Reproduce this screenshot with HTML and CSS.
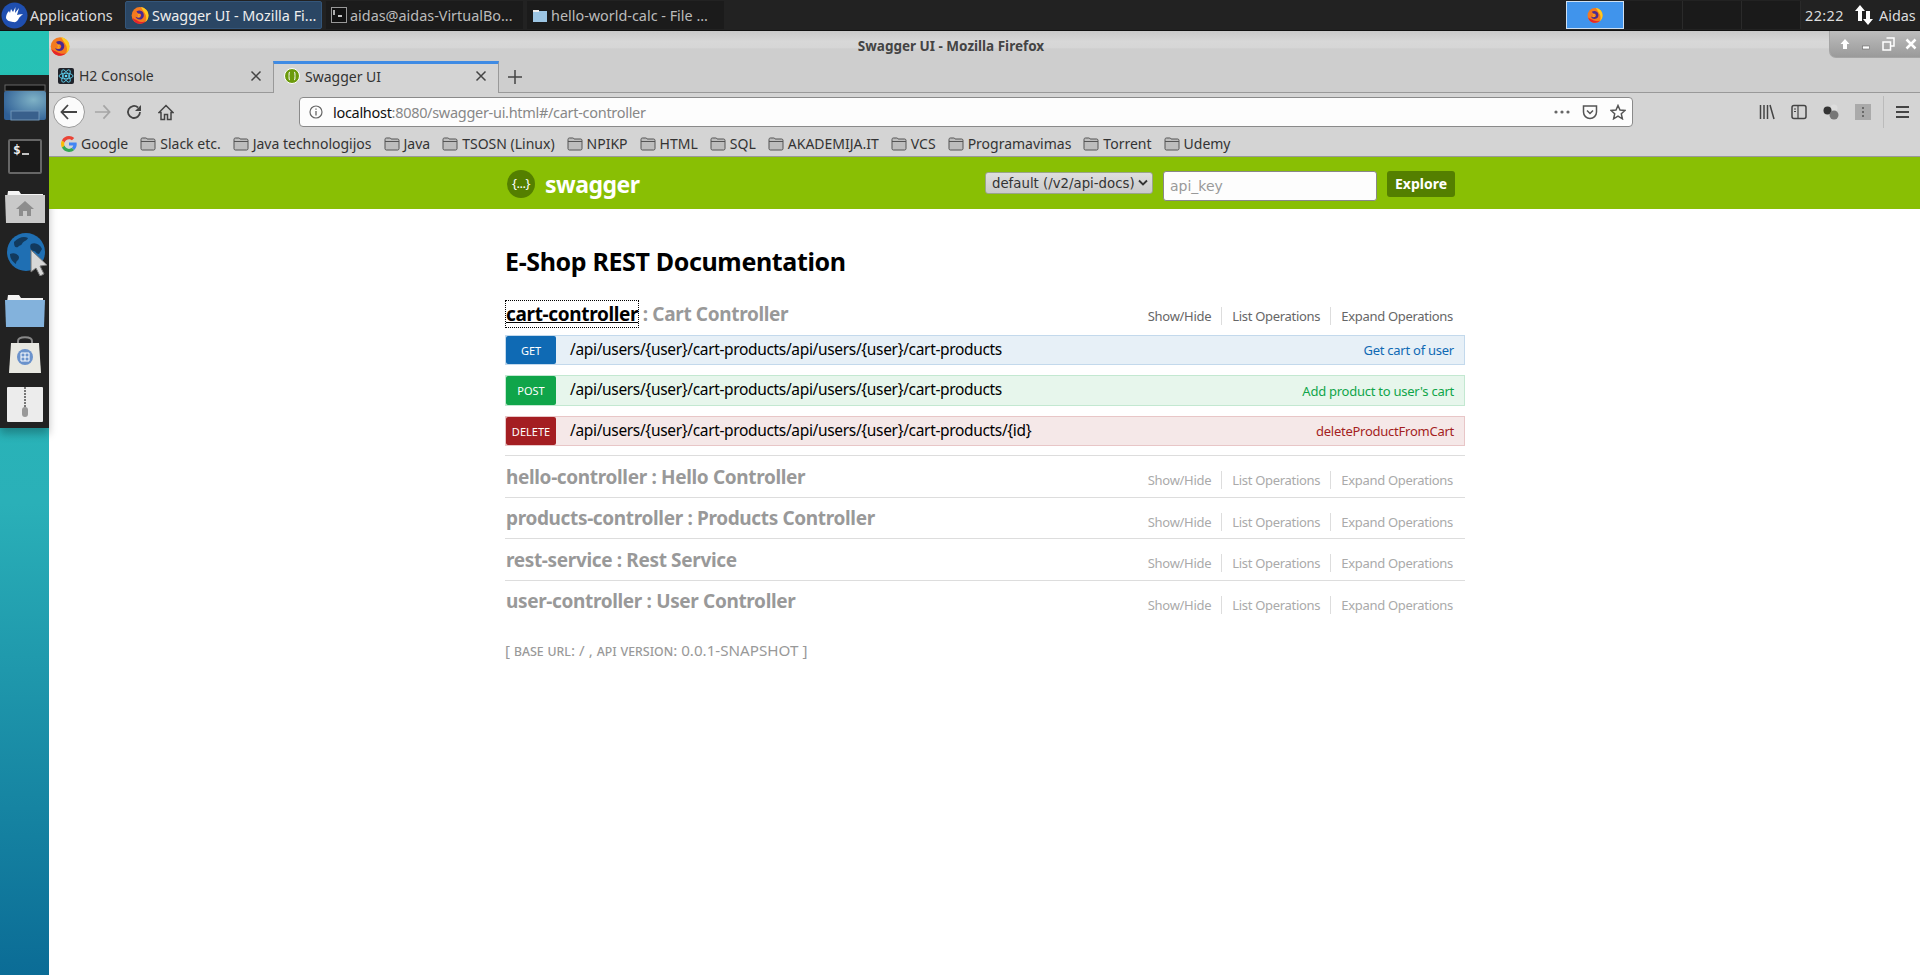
FILE: index.html
```html
<!DOCTYPE html>
<html lang="en">
<head>
    <meta charset="UTF-8">
    <meta name="viewport" content="width=device-width, initial-scale=1.0">
    <title>Swagger UI</title>
    <link rel="stylesheet" href="styles.css">
</head>
<body>
    <svg class="defs" width="0" height="0">
        <symbol id="firefox" viewBox="0 0 20 20">
            <circle cx="10" cy="10.500" r="9.300" fill="#f47a1f"/>
            <path d="M11 1c5 1 8.500 4.500 8.500 9.500 0 3-1.300 5.500-3.500 7.200 1.500-3 1.500-7-1-10.200C13.500 5 12 3 11 1z" fill="#ffc91f"/>
            <path d="M1.500 13c1 4 4.500 6.800 8.500 6.800 2.500 0 4.500-1 6-2.500-3 1-6.500.5-9-1.300C5 15 3 14.500 1.500 13z" fill="#e5252b"/>
            <path d="M6 6c3-2 7-1 8 2.500 1 3.500-1 6.500-4.500 6.500-2.500 0-4-1.500-4.500-3 1.500 1 4 1.500 5.500 0 1-1 1-2.500 0-3L8 8.500z" fill="#4b2a8f"/>
            <path d="M7 8.500h3.500l-1.500 2 1.500 2H7l1-2z" fill="#f9a11f"/>
        </symbol>
        <symbol id="folder" viewBox="0 0 16 14">
            <path d="M1 2.500C1 1.700 1.500 1 2.300 1h3.500c.7 0 1 .4 1.300 1h6.600c.8 0 1.300.6 1.300 1.300v8.400c0 .7-.5 1.300-1.300 1.300H2.300C1.500 13 1 12.400 1 11.700z" fill="#bdbdbd" stroke="#555"/>
            <path d="M1 4.500h14" stroke="#555"/>
        </symbol>
        <symbol id="close" viewBox="0 0 12 12">
            <path d="M1.500 1.500l9 9M10.500 1.500l-9 9" stroke="#444" stroke-width="1.500" fill="none"/>
        </symbol>
    </svg>

    <header class="panel">
        <div class="apps">
            <svg width="27" height="27" viewBox="0 0 27 27">
                <circle cx="13.500" cy="13.500" r="13" fill="#1f4fb0"/>
                <path d="M5 16c0-3 1-5 3-7l1 2 1-4 2 3 2.500-5-.5 6 4-5-2 7c2-.5 4-1 6-.5-2 1-3.500 2.500-4.500 4.500-1 2.500-3 3.500-5.500 3-3-.5-6-1-7-4z" fill="#fff"/>
            </svg>
            <span>Applications</span>
        </div>
        <div class="task task-active">
            <svg width="18" height="20"><use href="#firefox"/></svg>
            <span>Swagger UI - Mozilla Fi...</span>
        </div>
        <div class="task">
            <svg width="16" height="16" viewBox="0 0 16 16">
                <rect x=".5" y=".5" width="15" height="15" fill="#111" stroke="#999"/>
                <path d="M3 3v5M7 9h4" stroke="#fff" stroke-width="1.300"/>
            </svg>
            <span>aidas@aidas-VirtualBo...</span>
        </div>
        <div class="task">
            <svg width="16" height="16" viewBox="0 0 16 16">
                <path d="M1 3h5l1 1h8v11H1z" fill="#9cc5e3"/>
                <path d="M1 3h6v2H1z" fill="#eee"/>
            </svg>
            <span>hello-world-calc - File ...</span>
        </div>
        <div class="pager">
            <div class="pager-cell pager-active">
                <svg width="16" height="20"><use href="#firefox"/></svg>
            </div>
            <div class="pager-cell"></div>
            <div class="pager-cell"></div>
            <div class="pager-cell"></div>
        </div>
        <span class="clock">22:22</span>
        <svg class="net" width="20" height="24" viewBox="0 0 20 24">
            <path d="M6 2l5 6H8v10H4V8H1z" fill="#fff"/>
            <path d="M14 22l5-6h-3V8h-4v8H9z" fill="#fff"/>
        </svg>
        <span class="user">Aidas</span>
    </header>

    <div class="desktop">
        <aside class="side">
            <nav class="dock">
                <svg width="42" height="37" viewBox="0 0 42 37">
                    <defs>
                        <radialGradient id="screen" cx=".7" cy=".3" r=".8">
                            <stop offset="0" stop-color="#7fb2c6"/>
                            <stop offset="1" stop-color="#2f5f96"/>
                        </radialGradient>
                    </defs>
                    <rect x="1" y="1" width="40" height="6" fill="#111" stroke="#666"/>
                    <rect y="7" width="42" height="29" rx="2" fill="url(#screen)"/>
                    <rect x="7" y="27" width="28" height="9" fill="#39608c" stroke="#6f93b5"/>
                </svg>
                <svg class="dock-term" width="34" height="35" viewBox="0 0 34 35">
                    <rect x="1" y="1" width="32" height="33" rx="1" fill="#1a1a1a" stroke="#666" stroke-width="2"/>
                    <text x="5" y="15" class="term-text">$</text>
                    <path d="M14 15h7" stroke="#eee" stroke-width="1.600"/>
                </svg>
                <svg class="dock-home" width="40" height="33" viewBox="0 0 40 33">
                    <path d="M3 1h11l2 3h22v4H2z" fill="#f4f4f4"/>
                    <path d="M0 5h40v28H1z" fill="#c9c9c9"/>
                    <path d="M20 11l9 8h-3v7h-4v-5h-4v5h-4v-7h-3z" fill="#8d8d8d"/>
                </svg>
                <svg class="dock-globe" width="42" height="44" viewBox="0 0 42 44">
                    <circle cx="20" cy="20" r="19" fill="#1f6fb3"/>
                    <path d="M8 10c5-5 10-6 14-4-1 3-5 3-6 6-1 2-3 1-4 3-2 1-4 0-4-5zM4 22c4-2 8 0 9 3 0 4-3 3-3 7-3-2-6-5-6-10zM25 12c4-2 9 0 11 5l-3 5c-3 0-3-3-5-3-3 0-5-4-3-7z" fill="#123a5e"/>
                    <path d="M25 18l16 15-7 1 4 8-4 2-4-8-5 4z" fill="#d8d8d8" stroke="#777"/>
                </svg>
                <svg class="dock-folder" width="40" height="33" viewBox="0 0 40 33">
                    <path d="M3 1h11l2 3h22v4H2z" fill="#f4f4f4"/>
                    <path d="M0 6h40l-1 27H1z" fill="#83b2dc"/>
                </svg>
                <svg class="dock-bag" width="32" height="37" viewBox="0 0 32 37">
                    <path d="M9 10V5c0-5 14-5 14 0v5" fill="none" stroke="#888" stroke-width="2"/>
                    <path d="M2 7h28l2 30H0z" fill="#e9e9e2"/>
                    <circle cx="16" cy="21" r="8" fill="#6b93cc"/>
                    <path d="M12 17h8v8h-8zM12 21h8M16 17v8" fill="none" stroke="#fff"/>
                </svg>
                <svg class="dock-zip" width="36" height="35" viewBox="0 0 36 35">
                    <rect width="36" height="35" rx="1" fill="#ececec"/>
                    <path d="M18 0v20" stroke="#777" stroke-width="2" stroke-dasharray="2 1"/>
                    <rect x="15" y="20" width="6" height="10" rx="3" fill="#999"/>
                </svg>
            </nav>
        </aside>

        <div class="browser">
            <div class="titlebar">
                <svg class="title-icon" width="20" height="20"><use href="#firefox"/></svg>
                <span class="title-text">Swagger UI - Mozilla Firefox</span>
                <div class="winbtns">
                    <svg width="12" height="12" viewBox="0 0 12 12"><path d="M6 1l4.500 5H8v5H4V6H1.500z" fill="#fff"/></svg>
                    <svg width="12" height="12" viewBox="0 0 12 12"><rect x="1.500" y="8" width="7" height="3" fill="#fff" stroke="#666" stroke-width=".6"/></svg>
                    <svg width="13" height="14" viewBox="0 0 13 14"><path d="M4.500 1h7.500v8H9M1 5h7.500v8H1z" fill="none" stroke="#fff" stroke-width="1.500"/></svg>
                    <svg width="12" height="12" viewBox="0 0 12 12"><path d="M1.500 1.500l9 9M10.500 1.500l-9 9" stroke="#fff" stroke-width="2.500"/></svg>
                </div>
            </div>

            <div class="tabstrip">
                <div class="tab">
                    <svg width="16" height="16" viewBox="0 0 16 16">
                        <rect width="16" height="16" rx="2" fill="#20232a"/>
                        <g fill="none" stroke="#61dafb" stroke-width=".8">
                            <ellipse cx="8" cy="8" rx="7" ry="2.800"/>
                            <ellipse cx="8" cy="8" rx="7" ry="2.800" transform="rotate(60 8 8)"/>
                            <ellipse cx="8" cy="8" rx="7" ry="2.800" transform="rotate(120 8 8)"/>
                        </g>
                        <circle cx="8" cy="8" r="1.300" fill="#61dafb"/>
                    </svg>
                    <span class="tab-label">H2 Console</span>
                    <svg width="12" height="12"><use href="#close"/></svg>
                </div>
                <div class="tab tab-active">
                    <svg width="16" height="16" viewBox="0 0 16 16">
                        <circle cx="8" cy="8" r="7.500" fill="#6c9a0c" stroke="#fff"/>
                        <path d="M6 4C4 4 6 8 4.500 8 6 8 4 12 6 12M10 4c2 0 0 4 1.500 4C10 8 12 12 10 12" fill="none" stroke="#fff"/>
                    </svg>
                    <span class="tab-label">Swagger UI</span>
                    <svg width="12" height="12"><use href="#close"/></svg>
                </div>
                <svg class="newtab" width="14" height="14" viewBox="0 0 14 14">
                    <path d="M7 0v14M0 7h14" stroke="#444" stroke-width="1.500"/>
                </svg>
            </div>

            <div class="toolbar">
                <div class="back">
                    <svg width="18" height="16" viewBox="0 0 18 16"><path d="M8 1L1.500 8 8 15M2 8h15" fill="none" stroke="#444" stroke-width="1.800"/></svg>
                </div>
                <svg class="tool-fwd" width="17" height="16" viewBox="0 0 18 16"><path d="M10 1l6.500 7L10 15M16 8H1" fill="none" stroke="#a5a5a5" stroke-width="1.800"/></svg>
                <svg class="tool-reload" width="16" height="16" viewBox="0 0 16 16"><path d="M14 8a6 6 0 1 1-2-4.500" fill="none" stroke="#444" stroke-width="1.800"/><path d="M15 1v6H9z" fill="#444"/></svg>
                <svg class="tool-home" width="16" height="17" viewBox="0 0 16 17"><path d="M8 1.500L1 8.500h2v7h3.500v-5h3v5H13v-7h2z" fill="none" stroke="#444" stroke-width="1.500"/></svg>
                <div class="urlbar">
                    <svg class="url-info" width="14" height="14" viewBox="0 0 14 14"><circle cx="7" cy="7" r="6" fill="none" stroke="#666" stroke-width="1.200"/><path d="M7 6v4.500M7 3.500v1.300" stroke="#666" stroke-width="1.300"/></svg>
                    <span class="url-text"><b>localhost</b>:8080/swagger-ui.html#/cart-controller</span>
                    <svg class="url-more" width="16" height="4" viewBox="0 0 16 4"><circle cx="2" cy="2" r="1.600" fill="#666"/><circle cx="8" cy="2" r="1.600" fill="#666"/><circle cx="14" cy="2" r="1.600" fill="#666"/></svg>
                    <svg width="16" height="16" viewBox="0 0 16 16"><path d="M1.500 2h13v6a6.500 6.500 0 0 1-13 0z" fill="none" stroke="#555" stroke-width="1.500"/><path d="M5 6.500l3 3 3-3" fill="none" stroke="#555" stroke-width="1.500"/></svg>
                    <svg width="16" height="16" viewBox="0 0 16 16"><path d="M8 1.500l2 4.500 5 .5-3.700 3.300 1.100 5L8 12.200l-4.400 2.600 1.100-5L1 6.500 6 6z" fill="none" stroke="#555" stroke-width="1.500"/></svg>
                </div>
                <div class="tool-right">
                    <svg width="16" height="16" viewBox="0 0 16 16"><path d="M1.500 1v14M5 1v14M8.500 1v14M11 1l4 14" fill="none" stroke="#444" stroke-width="1.500"/></svg>
                    <svg width="16" height="16" viewBox="0 0 16 16"><rect x="1" y="1.500" width="14" height="13" rx="2" fill="none" stroke="#444" stroke-width="1.500"/><path d="M7 2v12M3 5h2M3 7.500h2" stroke="#444" stroke-width="1.200"/></svg>
                    <svg width="16" height="16" viewBox="0 0 16 16"><circle cx="11" cy="4" r="3.500" fill="#ddd"/><circle cx="4.500" cy="6.500" r="4" fill="#333"/><circle cx="11" cy="11" r="4.500" fill="#777"/></svg>
                    <svg width="16" height="16" viewBox="0 0 16 16"><rect width="16" height="16" fill="#aaa"/><path d="M8 3v2M8 7v2M8 11v2" stroke="#555" stroke-width="1.500"/></svg>
                    <span class="tool-sep"></span>
                    <svg width="13" height="14" viewBox="0 0 13 14"><path d="M0 2h13M0 7h13M0 12h13" stroke="#444" stroke-width="1.800"/></svg>
                </div>
            </div>

            <div class="bookmarks">
                <span class="mark">
                    <svg class="mark-g" width="16" height="16" viewBox="0 0 16 16">
                        <path d="M8 3.200c1.300 0 2.300.5 3 1.100l2.200-2.200C11.900.8 10.100 0 8 0 4.900 0 2.200 1.800.9 4.400l2.600 2C4.100 4.500 5.900 3.200 8 3.200z" fill="#ea4335"/>
                        <path d="M15.700 8.200c0-.6-.1-1.100-.2-1.600H8v3h4.300c-.2 1-.7 1.800-1.600 2.400l2.500 1.900c1.500-1.300 2.500-3.300 2.500-5.700z" fill="#4285f4"/>
                        <path d="M3.500 9.600L.9 11.600C2.200 14.200 4.900 16 8 16c2.100 0 4-.7 5.200-2l-2.500-1.900c-.7.500-1.600.8-2.700.8-2.100 0-3.900-1.400-4.500-3.300z" fill="#34a853"/>
                        <path d="M3.500 9.600C3.300 9.100 3.200 8.500 3.200 8s.1-1.100.3-1.600l-2.600-2C.3 5.500 0 6.700 0 8s.3 2.500.9 3.600z" fill="#fbbc05"/>
                    </svg>Google
                </span>
                <span class="mark"><svg width="16" height="14"><use href="#folder"/></svg>Slack etc.</span>
                <span class="mark"><svg width="16" height="14"><use href="#folder"/></svg>Java technologijos</span>
                <span class="mark"><svg width="16" height="14"><use href="#folder"/></svg>Java</span>
                <span class="mark"><svg width="16" height="14"><use href="#folder"/></svg>TSOSN (Linux)</span>
                <span class="mark"><svg width="16" height="14"><use href="#folder"/></svg>NPIKP</span>
                <span class="mark"><svg width="16" height="14"><use href="#folder"/></svg>HTML</span>
                <span class="mark"><svg width="16" height="14"><use href="#folder"/></svg>SQL</span>
                <span class="mark"><svg width="16" height="14"><use href="#folder"/></svg>AKADEMIJA.IT</span>
                <span class="mark"><svg width="16" height="14"><use href="#folder"/></svg>VCS</span>
                <span class="mark"><svg width="16" height="14"><use href="#folder"/></svg>Programavimas</span>
                <span class="mark"><svg width="16" height="14"><use href="#folder"/></svg>Torrent</span>
                <span class="mark"><svg width="16" height="14"><use href="#folder"/></svg>Udemy</span>
            </div>

            <div class="swagger-header">
                <div class="wrap header-row">
                    <div class="logo">
                        <span class="logo-mark">{...}</span>
                        <span class="logo-text">swagger</span>
                    </div>
                    <form class="api-form">
                        <div class="select-box">
                            <select class="api-select">
                                <option>default (/v2/api-docs)</option>
                            </select>
                            <svg class="select-arrow" width="10" height="7" viewBox="0 0 10 7"><path d="M1 1.500l4 4 4-4" fill="none" stroke="#333" stroke-width="1.800"/></svg>
                        </div>
                        <input class="api-key" type="text" placeholder="api_key">
                        <a class="explore" href="#">Explore</a>
                    </form>
                </div>
            </div>

            <main class="wrap content">
                <h1>E-Shop REST Documentation</h1>

                <section class="resource resource-open">
                    <div class="res-head">
                        <h2><a class="res-link-focus" href="#">cart-controller</a> : Cart Controller</h2>
                        <ul class="res-actions">
                            <li>Show/Hide</li>
                            <li>List Operations</li>
                            <li>Expand Operations</li>
                        </ul>
                    </div>
                    <div class="op op-get">
                        <span class="method">GET</span>
                        <span class="op-path">/api/users/{user}/cart-products/api/users/{user}/cart-products</span>
                        <span class="op-sum">Get cart of user</span>
                    </div>
                    <div class="op op-post">
                        <span class="method">POST</span>
                        <span class="op-path">/api/users/{user}/cart-products/api/users/{user}/cart-products</span>
                        <span class="op-sum">Add product to user's cart</span>
                    </div>
                    <div class="op op-delete">
                        <span class="method">DELETE</span>
                        <span class="op-path">/api/users/{user}/cart-products/api/users/{user}/cart-products/{id}</span>
                        <span class="op-sum">deleteProductFromCart</span>
                    </div>
                </section>

                <section class="resource">
                    <div class="res-head">
                        <h2>hello-controller : Hello Controller</h2>
                        <ul class="res-actions res-actions-dim">
                            <li>Show/Hide</li>
                            <li>List Operations</li>
                            <li>Expand Operations</li>
                        </ul>
                    </div>
                </section>
                <section class="resource">
                    <div class="res-head">
                        <h2>products-controller : Products Controller</h2>
                        <ul class="res-actions res-actions-dim">
                            <li>Show/Hide</li>
                            <li>List Operations</li>
                            <li>Expand Operations</li>
                        </ul>
                    </div>
                </section>
                <section class="resource">
                    <div class="res-head">
                        <h2>rest-service : Rest Service</h2>
                        <ul class="res-actions res-actions-dim">
                            <li>Show/Hide</li>
                            <li>List Operations</li>
                            <li>Expand Operations</li>
                        </ul>
                    </div>
                </section>
                <section class="resource resource-last">
                    <div class="res-head">
                        <h2>user-controller : User Controller</h2>
                        <ul class="res-actions res-actions-dim">
                            <li>Show/Hide</li>
                            <li>List Operations</li>
                            <li>Expand Operations</li>
                        </ul>
                    </div>
                </section>

                <p class="api-footer">[ <span class="caps">base url</span>: / , <span class="caps">api version</span>: 0.0.1-SNAPSHOT ]</p>
            </main>
        </div>
    </div>
</body>
</html>
```

FILE: styles.css
```css
html, body {
    margin: 0;
    height: 100%;
    overflow: hidden;
}
body {
    font-family: "Noto Sans", sans-serif;
    background: #fff;
    color: #000;
}
.defs {
    position: absolute;
}
svg {
    display: block;
    flex: none;
}

/* desktop panel */
.panel {
    height: 31px;
    box-sizing: border-box;
    background: #222;
    border-bottom: 1px solid #111;
    display: flex;
    align-items: center;
    color: #ddd;
    font-size: 14.400px;
}
.apps {
    display: flex;
    align-items: center;
    gap: 2px;
    width: 125px;
    padding-left: 1px;
    box-sizing: border-box;
}
.task {
    width: 197px;
    height: 28px;
    margin-right: 4px;
    padding-left: 5px;
    box-sizing: border-box;
    display: flex;
    align-items: center;
    gap: 3px;
    background: #1b1b1b;
    color: #bbb;
    white-space: nowrap;
    overflow: hidden;
}
.task-active {
    background: #2a4664;
    color: #eee;
    border: 1px solid #34567a;
    border-radius: 2px;
}
.pager {
    margin-left: auto;
    display: flex;
    height: 28px;
}
.pager-cell {
    width: 58px;
    background: #1a1a1a;
    border-right: 1px solid #2a2a2a;
    display: flex;
    align-items: center;
    justify-content: center;
}
.pager-active {
    background: #4094ec;
    border: 1px solid #cfe0f2;
    box-sizing: border-box;
}
.clock {
    margin-left: 4px;
    width: 49px;
    letter-spacing: .4px;
}
.net {
    margin-right: 5px;
}
.user {
    width: 41px;
}

/* desktop strip with dock */
.desktop {
    display: flex;
    height: 944px;
}
.side {
    width: 49px;
    flex: none;
    padding-top: 44px;
    box-sizing: border-box;
    background: linear-gradient(#25c2b5, #2ab0b8 50%, #0b6c96);
}
.dock {
    height: 353px;
    box-sizing: border-box;
    padding-top: 9px;
    background: #222;
    box-shadow: 0 6px 8px rgba(0, 0, 0, .25);
    display: flex;
    flex-direction: column;
    align-items: center;
}
.dock-term { margin-top: 18px; }
.dock-home { margin-top: 16px; }
.dock-globe { margin-top: 9px; margin-left: 4px; }
.dock-folder { margin-top: 18px; }
.dock-bag { margin-top: 9px; }
.dock-zip { margin-top: 14px; }
.term-text {
    font-family: "DejaVu Sans Mono", monospace;
    font-size: 13px;
    font-weight: bold;
    fill: #eee;
}

/* firefox window */
.browser {
    flex: 1;
    min-width: 0;
}
.titlebar {
    height: 30px;
    background: linear-gradient(#c9c9c9, #d8d8d8 35%, #d6d6d6 55%, #cecece 60%);
    box-sizing: border-box;
    display: flex;
    align-items: center;
    justify-content: center;
    padding-right: 67px;
    position: relative;
    font-size: 13.500px;
    font-weight: bold;
    color: #444;
}
.title-icon {
    position: absolute;
    left: 1px;
    top: 5px;
}
.winbtns {
    position: absolute;
    right: 0;
    top: 0;
    width: 91px;
    height: 27px;
    box-sizing: border-box;
    padding: 0 3px 0 9px;
    display: flex;
    align-items: center;
    justify-content: space-between;
    background: linear-gradient(#bdbdbd, #9a9a9a);
    border: 1px solid #a5a5a5;
    border-width: 0 0 1px 1px;
    border-bottom-left-radius: 7px;
}
.tabstrip {
    height: 32px;
    background: #cecece;
    border-bottom: 1px solid #999;
    box-sizing: border-box;
    display: flex;
    align-items: stretch;
    font-size: 14px;
    color: #333;
}
.tab {
    width: 224px;
    box-sizing: border-box;
    padding: 0 11px 2px 9px;
    display: flex;
    align-items: center;
    gap: 5px;
}
.tab-label {
    flex: 1;
}
.tab-active {
    width: 226px;
    margin-bottom: -1px;
    padding: 0 11px 5px 10px;
    background: #d4d4d4;
    border: 1px solid #999;
    border-width: 0 1px;
    border-top: 3px solid #3f8be4;
}
.newtab {
    align-self: center;
    margin-left: 9px;
}
.toolbar {
    height: 38px;
    background: #d4d4d4;
    display: flex;
    align-items: center;
    position: relative;
}
.back {
    width: 32px;
    height: 32px;
    margin-left: 4px;
    border-radius: 50%;
    box-sizing: border-box;
    background: #fbfbfb;
    border: 1px solid #999;
    display: flex;
    align-items: center;
    justify-content: center;
}
.tool-fwd { margin-left: 9px; }
.tool-reload { margin-left: 15px; }
.tool-home { margin-left: 16px; }
.urlbar {
    width: 1334px;
    height: 30px;
    margin-left: 125px;
    box-sizing: border-box;
    background: #fdfdfd;
    border: 1px solid #8a8a8a;
    border-radius: 4px;
    display: flex;
    align-items: center;
    padding: 0 6px 0 9px;
    gap: 12px;
    font-size: 14.500px;
    letter-spacing: -.3px;
    color: #888;
}
.url-text {
    flex: 1;
    margin-left: -2px;
}
.url-text b {
    font-weight: normal;
    color: #111;
}
.tool-right {
    margin-left: 126px;
    display: flex;
    align-items: center;
    gap: 16px;
}
.tool-sep {
    width: 1px;
    height: 32px;
    background: #bbb;
    margin: 0 -4px 0 -4px;
}
.bookmarks {
    height: 26px;
    background: #d4d4d4;
    border-bottom: 1px solid #999;
    box-sizing: border-box;
    display: flex;
    align-items: center;
    padding-left: 12px;
    gap: 12px;
    font-size: 14px;
    color: #333;
    white-space: nowrap;
}
.mark {
    display: flex;
    align-items: center;
    gap: 4px;
}

/* swagger page */
.wrap {
    width: 960px;
    margin-left: 456px;
}
.swagger-header {
    height: 52px;
    background: #89bf04;
}
.header-row {
    height: 100%;
    display: flex;
    align-items: center;
    justify-content: space-between;
}
.logo {
    display: flex;
    align-items: center;
    gap: 10px;
    padding-left: 2px;
    margin-top: 2px;
}
.logo-mark {
    width: 28px;
    height: 28px;
    border-radius: 50%;
    background: #547f00;
    color: #fff;
    font-size: 13px;
    line-height: 26px;
    text-align: center;
    letter-spacing: -.5px;
}
.logo-text {
    color: #fff;
    font-size: 23px;
    font-weight: bold;
    letter-spacing: -.5px;
}
.api-form {
    display: flex;
    align-items: flex-start;
    padding-right: 10px;
    margin-top: 6px;
}
.select-box {
    margin: 1px 10px 0 0;
    position: relative;
}
.api-select {
    display: block;
    width: 168px;
    height: 22px;
    padding: 0 0 0 6px;
    appearance: none;
    font-family: "DejaVu Sans", sans-serif;
    font-size: 13.300px;
    color: #333;
    background: linear-gradient(#dedede, #cacaca);
    border: 1px solid #9aa58a;
    border-radius: 3px;
}
.select-arrow {
    position: absolute;
    right: 5px;
    top: 7px;
}
.api-key {
    width: 214px;
    height: 30px;
    margin: 0 10px 0 0;
    padding: 0 6px;
    box-sizing: border-box;
    font-family: "DejaVu Sans", sans-serif;
    font-size: 14px;
    background: #fdfdfd;
    border: 1px solid #888;
    border-radius: 3px;
}
.api-key::placeholder {
    color: #999;
}
.explore {
    width: 68px;
    height: 26px;
    background: #547f00;
    color: #fff;
    font-size: 14px;
    font-weight: bold;
    line-height: 25px;
    text-align: center;
    text-decoration: none;
    border-radius: 3px;
}
.content {
    padding-top: 39px;
}
h1 {
    margin: 0 0 26px;
    font-size: 25px;
    line-height: 26px;
    font-weight: bold;
    letter-spacing: -.36px;
}
.res-head {
    display: flex;
    justify-content: space-between;
    align-items: center;
    height: 41px;
}
.resource-open .res-head {
    height: 35px;
}
.resource {
    border-bottom: 1px solid #ddd;
    height: 41.670px;
    box-sizing: border-box;
}
.resource-open {
    height: auto;
    padding-bottom: 9px;
}
.resource-last {
    border-bottom: 0;
}
h2 {
    margin: 0;
    padding-left: 1px;
    font-size: 19px;
    font-weight: bold;
    letter-spacing: -.35px;
    color: #999;
}
.resource-open h2 {
    margin-bottom: 7px;
}
.res-link-focus {
    color: #000;
    outline: 1px dotted #000;
}
.res-actions {
    list-style: none;
    margin: 7px 0 0;
    padding: 0;
    display: flex;
    font-size: 13px;
    letter-spacing: -.3px;
    color: #666;
}
.resource-open .res-actions {
    margin-top: 0;
    margin-bottom: 3px;
}
.res-actions li {
    padding: 0 10px;
    border-left: 1px solid #ddd;
}
.res-actions li:last-child {
    padding-right: 12px;
}
.res-actions li:first-child {
    border-left: 0;
}
.res-actions-dim {
    color: #aaa;
}
.op {
    height: 30px;
    margin-bottom: 10px;
    box-sizing: border-box;
    display: flex;
    align-items: center;
    padding-left: 0;
    border: 1px solid;
    font-size: 15.500px;
    letter-spacing: -.34px;
}
.op:last-child {
    margin-bottom: 0;
}
.op-post {
    height: 31px;
}
.method {
    width: 50px;
    height: 100%;
    flex: none;
    color: #fff;
    font-size: 11px;
    letter-spacing: 0;
    line-height: 29px;
    text-align: center;
    border-radius: 2px;
}
.op-path {
    flex: 1;
    margin-left: 14px;
    margin-top: -3px;
}
.op-sum {
    padding-right: 10px;
    font-size: 13px;
    letter-spacing: -.25px;
}
.op-get { background: #e7f0f7; border-color: #c3d9ec; }
.op-get .method { background: #0f6ab4; }
.op-get .op-sum { color: #0f6ab4; }
.op-post { background: #e7f6ec; border-color: #c3e8d1; }
.op-post .method { background: #10a54a; }
.op-post .op-sum { color: #10a54a; }
.op-delete { background: #f5e8e8; border-color: #e8c6c7; }
.op-delete .method { background: #a41e22; }
.op-delete .op-sum { color: #a41e22; }
.api-footer {
    margin: 17px 0 0;
    font-size: 15.200px;
    color: #999;
}
.caps {
    font-variant: small-caps;
}
```
